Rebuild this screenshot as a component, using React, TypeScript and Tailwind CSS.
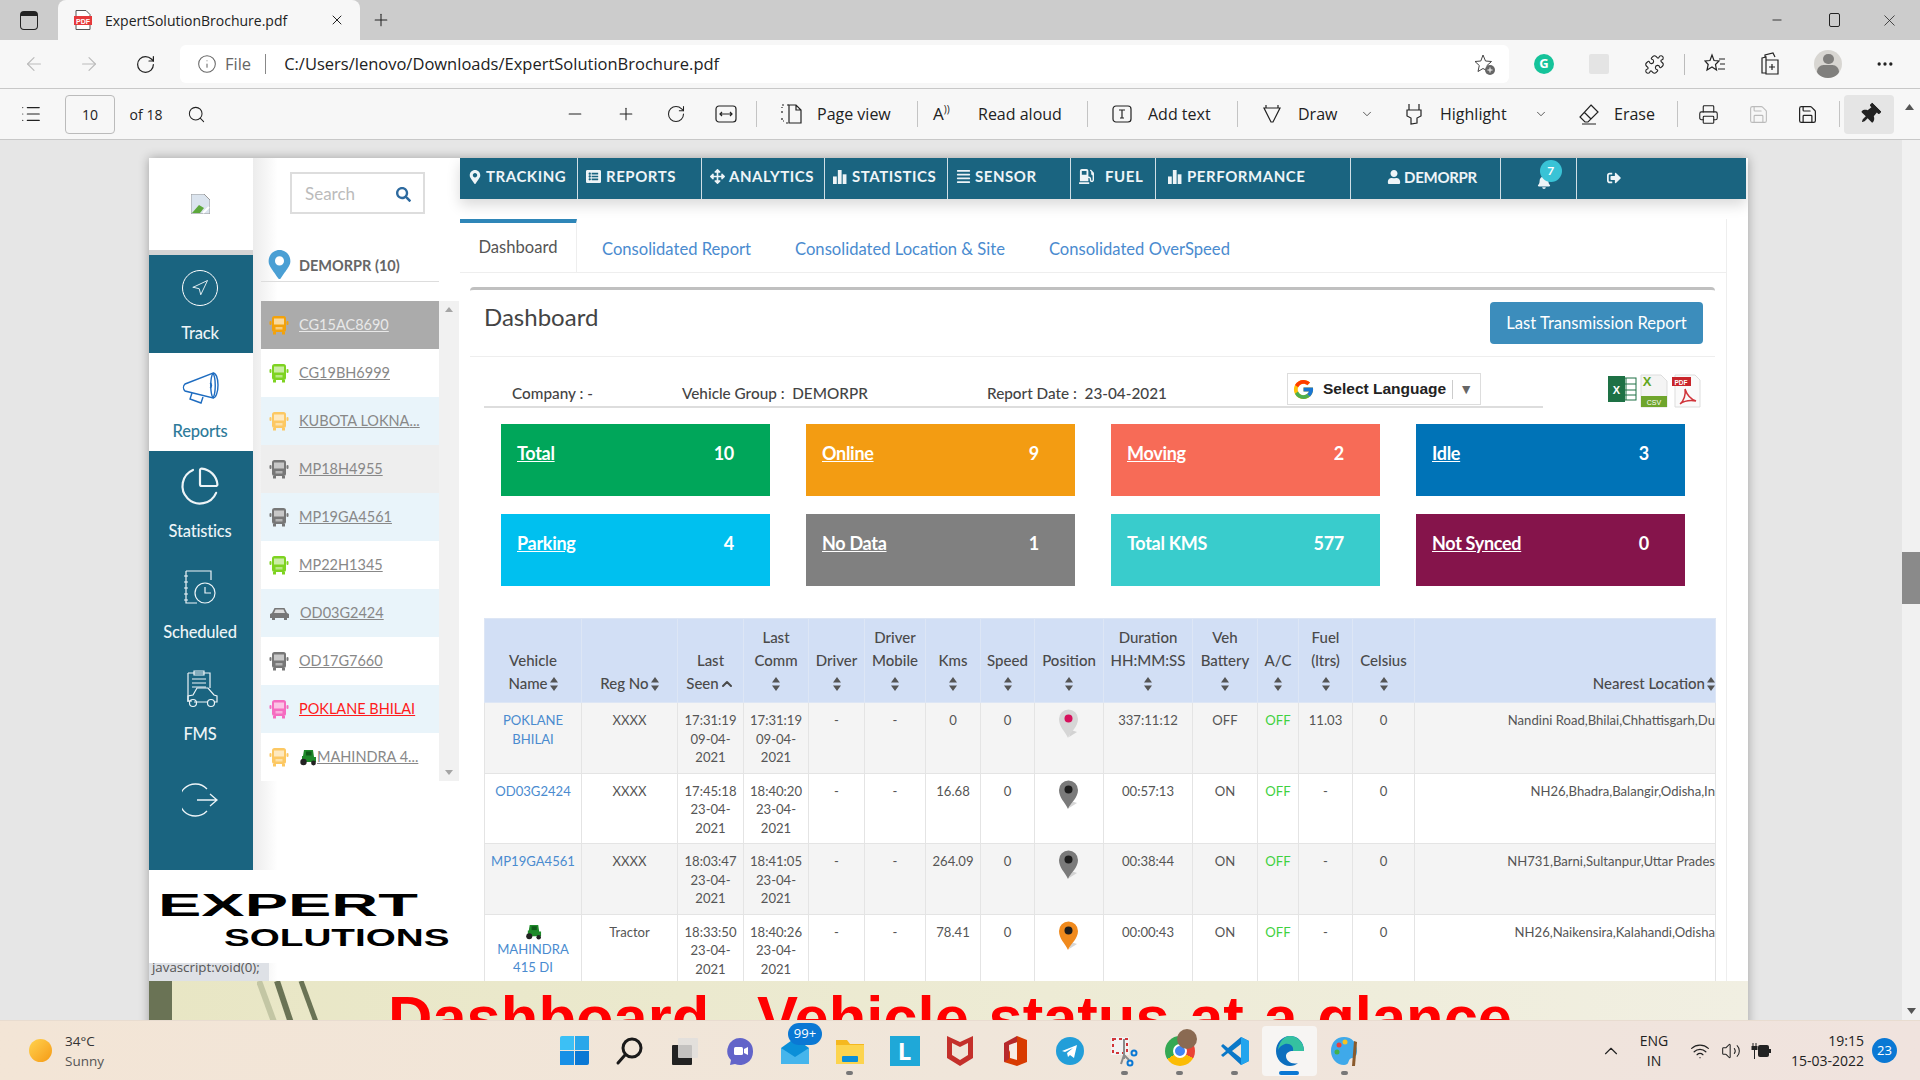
import { Fragment, type ReactNode } from "react";
import {
  ArrowLeft,
  ArrowRight,
  RotateCw,
  Info,
  Search,
  Minus,
  Plus,
  X,
  List,
  Puzzle,
  MoreHorizontal,
  ChevronDown,
  ChevronUp,
  Printer,
  Save,
  Navigation,
  PieChart,
  Wifi,
  Volume2,
} from "lucide-react";
import {
  FaMapMarkerAlt,
  FaListAlt,
  FaArrowsAlt,
  FaAlignJustify,
  FaGasPump,
  FaUser,
  FaBell,
  FaSignOutAlt,
  FaThumbtack,
  FaSearch,
} from "react-icons/fa";
import { FcGoogle } from "react-icons/fc";

const Sep = () => <div className="w-px h-[26px] bg-[#c4c4c4]" />;

const Bars = () => (
  <svg width="14" height="14" viewBox="0 0 13 13" fill="currentColor">
    <rect x="0" y="6" width="3.5" height="7" />
    <rect x="4.5" y="0" width="3.5" height="13" />
    <rect x="9" y="4" width="3.5" height="9" />
  </svg>
);

const Sort = () => (
  <svg width="8" height="14" viewBox="0 0 8 14" fill="#555" className="inline-block align-[-2px]">
    <path d="M4 0 8 5.5H0zM4 14 0 8.5h8z" />
  </svg>
);

const Bus = ({ color }: { color: string }) => (
  <svg width="20" height="20" viewBox="0 0 20 20" fill={color}>
    <rect x="3" y="1" width="14" height="16" rx="2.5" />
    <rect x="0.5" y="6" width="2" height="4" rx="1" />
    <rect x="17.5" y="6" width="2" height="4" rx="1" />
    <rect x="4" y="17" width="3" height="2.5" />
    <rect x="13" y="17" width="3" height="2.5" />
    <rect x="5" y="3.5" width="10" height="6" fill="#fff" opacity="0.6" />
    <rect x="6.5" y="12" width="7" height="2.5" fill="#fff" opacity="0.45" />
  </svg>
);

const Car = ({ color }: { color: string }) => (
  <svg width="21" height="20" viewBox="0 0 21 20" fill={color}>
    <path d="M1 15v-4l2-1 2.500-5h10l2.500 5 2 1v4h-2v2h-3v-2H6v2H3v-2z" />
    <path d="M6.500 6.500h8l1.500 3.500H5z" fill="#fff" opacity="0.75" />
  </svg>
);

const Tractor = ({ size = 18 }: { size?: number }) => (
  <svg width={size} height={size} viewBox="0 0 18 18">
    <path d="M5 2h9l1 7h2v5H3V8h1z" fill="#1f8a2a" />
    <rect x="7" y="3.500" width="5.500" height="4" fill="#0e5a18" />
    <circle cx="4.500" cy="14" r="3.200" fill="#222" />
    <circle cx="14.500" cy="15" r="2.400" fill="#222" />
  </svg>
);

const Pin = ({ color, dot }: { color: string; dot: string }) => (
  <svg width="22" height="30" viewBox="0 0 22 30" className="mx-auto">
    <path d="M11 28 19 23 13 21z" fill="#bbb" opacity="0.6" />
    <path d="M10 29C7 22 1 18 1 10a9.500 9.500 0 0 1 19 0c0 8-7 12-10 19z" fill={color} />
    <circle cx="10.500" cy="9.500" r="4" fill={dot} />
  </svg>
);

const vehicles = [
  { name: "CG15AC8690", color: "#f2a20c", text: "text-[#e8e8e8]", bg: "bg-[#ababab]" },
  { name: "CG19BH6999", color: "#7ed321", text: "text-[#888]", bg: "bg-white" },
  { name: "KUBOTA LOKNA", more: true, color: "#fcc863", text: "text-[#888]", bg: "bg-[#e9f4fa]" },
  { name: "MP18H4955", color: "#777", text: "text-[#888]", bg: "bg-[#eeeeee]" },
  { name: "MP19GA4561", color: "#777", text: "text-[#888]", bg: "bg-[#e9f4fa]" },
  { name: "MP22H1345", color: "#7ed321", text: "text-[#888]", bg: "bg-white" },
  { name: "OD03G2424", color: "#777", car: true, text: "text-[#888]", bg: "bg-[#e9f4fa]" },
  { name: "OD17G7660", color: "#777", text: "text-[#888]", bg: "bg-white" },
  { name: "POKLANE BHILAI", color: "#f56cc0", text: "text-[#ff1a1a]", bg: "bg-[#e9f4fa]" },
  { name: "MAHINDRA 4", more: true, tractor: true, color: "#fcc863", text: "text-[#888]", bg: "bg-white" },
];

const cards = [
  { label: "Total", value: "10", bg: "bg-[#00a65a]", u: true },
  { label: "Online", value: "9", bg: "bg-[#f39c12]", u: true },
  { label: "Moving", value: "2", bg: "bg-[#f76b57]", u: true },
  { label: "Idle", value: "3", bg: "bg-[#0073b7]", u: true },
  { label: "Parking", value: "4", bg: "bg-[#00c0ef]", u: true },
  { label: "No Data", value: "1", bg: "bg-[#808080]", u: true },
  { label: "Total KMS", value: "577", bg: "bg-[#39cccc]", u: false },
  { label: "Not Synced", value: "0", bg: "bg-[#85144b]", u: true },
];

const columns: { w: string; lines: string[]; sort?: "inline" | "below" | "up" }[] = [
  { w: "w-[97px]", lines: ["Vehicle", "Name"], sort: "inline" },
  { w: "w-[96px]", lines: ["Reg No"], sort: "inline" },
  { w: "w-[66px]", lines: ["Last", "Seen"], sort: "up" },
  { w: "w-[65px]", lines: ["Last", "Comm"], sort: "below" },
  { w: "w-[56px]", lines: ["Driver"], sort: "below" },
  { w: "w-[61px]", lines: ["Driver", "Mobile"], sort: "below" },
  { w: "w-[55px]", lines: ["Kms"], sort: "below" },
  { w: "w-[54px]", lines: ["Speed"], sort: "below" },
  { w: "w-[69px]", lines: ["Position"], sort: "below" },
  { w: "w-[89px]", lines: ["Duration", "HH:MM:SS"], sort: "below" },
  { w: "w-[65px]", lines: ["Veh", "Battery"], sort: "below" },
  { w: "w-[41px]", lines: ["A/C"], sort: "below" },
  { w: "w-[54px]", lines: ["Fuel", "(ltrs)"], sort: "below" },
  { w: "w-[62px]", lines: ["Celsius"], sort: "below" },
  { w: "w-[301px]", lines: ["Nearest Location"], sort: "inline" },
];

const rows = [
  { name: ["POKLANE", "BHILAI"], reg: "XXXX", seen: "17:31:19", seenD: "09-04-", comm: "17:31:19", commD: "09-04-", kms: "0", pin: ["#d6d6d6", "#d6115c"], dur: "337:11:12", bat: "OFF", fuel: "11.03", loc: "Nandini Road,Bhilai,Chhattisgarh,Du" },
  { name: ["OD03G2424"], reg: "XXXX", seen: "17:45:18", seenD: "23-04-", comm: "18:40:20", commD: "23-04-", kms: "16.68", pin: ["#7a7a7a", "#1d1d1d"], dur: "00:57:13", bat: "ON", fuel: "-", loc: "NH26,Bhadra,Balangir,Odisha,In" },
  { name: ["MP19GA4561"], reg: "XXXX", seen: "18:03:47", seenD: "23-04-", comm: "18:41:05", commD: "23-04-", kms: "264.09", pin: ["#7a7a7a", "#1d1d1d"], dur: "00:38:44", bat: "ON", fuel: "-", loc: "NH731,Barni,Sultanpur,Uttar Prades" },
  { name: ["MAHINDRA", "415 DI"], tractor: true, reg: "Tractor", seen: "18:33:50", seenD: "23-04-", comm: "18:40:26", commD: "23-04-", kms: "78.41", pin: ["#f08a1d", "#1d1d1d"], dur: "00:00:43", bat: "ON", fuel: "-", loc: "NH26,Naikensira,Kalahandi,Odisha" },
];

const navItems: { w: string; label: string; icon: ReactNode; cls?: string }[] = [
  { w: "w-[118px]", label: "TRACKING", icon: <FaMapMarkerAlt size={14} /> },
  { w: "w-[124px]", label: "REPORTS", icon: <FaListAlt size={15} />, cls: "gap-[5px]" },
  { w: "w-[123px]", label: "ANALYTICS", icon: <FaArrowsAlt size={15} /> },
  { w: "w-[123px]", label: "STATISTICS", icon: <Bars />, cls: "gap-[5px]" },
  { w: "w-[123px]", label: "SENSOR", icon: <FaAlignJustify size={15} /> },
  { w: "w-[85px]", label: "FUEL", icon: <FaGasPump size={15} />, cls: "gap-[11px]" },
  { w: "w-[195px]", label: "PERFORMANCE", icon: <Bars />, cls: "gap-[5px] pl-[12px]" },
];

const Side = ({ h, active, label, icon, cls }: { h: string; active?: boolean; label?: string; icon: ReactNode; cls?: string }) => (
  <div className={`${h} ${cls ?? ""} flex flex-col items-center pr-[2px] ${active ? "bg-white text-[#2e7b9a]" : "text-[#edf4f7]"}`}>
    {icon}
    {label && <span className="text-[16.5px] font-medium leading-5 tracking-[-0.2px]">{label}</span>}
  </div>
);

const TaskIcon = ({ children, dot, active }: { children: ReactNode; dot?: boolean; active?: boolean }) => (
  <div className={`relative w-[55px] h-[50px] flex items-center justify-center rounded ${active ? "bg-[#f7f5f3]" : ""}`}>
    {children}
    {dot && <div className="absolute bottom-[1px] left-[24px] w-[7px] h-[4px] rounded-full bg-[#777]" />}
    {active && <div className="absolute bottom-[1px] left-[17px] w-[20px] h-[4px] rounded-full bg-[#0a78d4]" />}
  </div>
);

const App = () => {
  return (
    <div className="w-[1920px] h-[1080px] overflow-hidden flex flex-col bg-[#e6e6e6] font-['Open_Sans',sans-serif] text-[#222]">
      {/* tab strip */}
      <div className="h-10 bg-[#cccccc] flex items-end shrink-0">
        <div className="w-[58px] h-10 flex items-center justify-center">
          <div className="w-[18px] h-[19px] border-[1.5px] border-[#222] rounded-[4px] border-t-[5px]" />
        </div>
        <div className="w-[302px] h-10 bg-[#f7f7f7] rounded-t-lg flex items-center pl-[16px] pr-[15px]">
          <svg width="18" height="20" viewBox="0 0 18 20">
            <path d="M2 .5h10l4 4V19.500H2z" fill="#fff" stroke="#555" />
            <rect x="0" y="6" width="18" height="9" fill="#e5393b" />
            <text x="9" y="13.500" textAnchor="middle" fontSize="7" fontWeight="700" fill="#fff" fontFamily="Liberation Sans">PDF</text>
          </svg>
          <span className="ml-[13px] text-[14px] flex-1">ExpertSolutionBrochure.pdf</span>
          <X size={16} strokeWidth={1.5} />
        </div>
        <div className="w-[42px] h-10 flex items-center justify-center">
          <Plus size={20} strokeWidth={1.25} />
        </div>
        <div className="flex-1" />
        <div className="flex h-10 items-center">
          <div className="w-[58px] flex justify-center"><Minus size={14} strokeWidth={1.5} /></div>
          <div className="w-[56px] flex justify-center">
            <div className="w-[11px] h-[14px] border border-[#222] rounded-[2px]" />
          </div>
          <div className="w-[58px] flex justify-center pr-[3px]"><X size={19} strokeWidth={1} /></div>
        </div>
      </div>

      {/* address row */}
      <div className="h-[49px] bg-[#f7f7f7] border-b border-[#c8c8c8] flex items-center shrink-0">
        <div className="w-[67px] flex justify-center text-[#bbb]"><ArrowLeft size={22} strokeWidth={1.25} /></div>
        <div className="w-[43px] flex justify-center text-[#bbb]"><ArrowRight size={22} strokeWidth={1.25} /></div>
        <div className="w-[70px] flex justify-center"><RotateCw size={21} strokeWidth={1.4} /></div>
        <div className="w-[1329px] h-[38px] bg-white rounded-md flex items-center">
          <Info size={20} strokeWidth={1.25} className="ml-[17px] text-[#666]" />
          <span className="ml-[8px] text-[16.5px] text-[#666]">File</span>
          <div className="ml-[14px] w-px h-[20px] bg-[#888]" />
          <span className="ml-[18px] text-[16.500px] flex-1">C:/Users/lenovo/Downloads/ExpertSolutionBrochure.pdf</span>
          <svg width="24" height="24" viewBox="0 0 24 24" className="mr-[13px]" fill="none" stroke="#444">
            <path d="M11 3l2.500 6 6 .5-4.500 4 1.500 6-5.500-3-5 3 1.300-6L3 9.500l5.800-.5z" />
            <circle cx="18" cy="18" r="5" fill="#666" stroke="none" />
            <path d="M18 15.500v5M15.500 18h5" stroke="#fff" />
          </svg>
        </div>
        <div className="w-[50px] flex justify-end pr-[5px]">
          <div className="w-[20px] h-[20px] rounded-full bg-[#15c39a] text-white text-[13px] font-bold flex items-center justify-center">G</div>
        </div>
        <div className="w-[55px] flex justify-end pr-[5px]">
          <div className="w-[20px] h-[20px] bg-[#e4e4e4] rounded-[2px]" />
        </div>
        <div className="w-[56px] flex justify-end pr-[5px]"><Puzzle size={21} strokeWidth={1.25} /></div>
        <div className="w-[15px] flex justify-end"><div className="w-px h-[21px] bg-[#bbb]" /></div>
        <div className="w-[41px] flex justify-end">
          <svg width="22" height="22" viewBox="0 0 22 22" fill="none" stroke="#222" strokeWidth="1.2">
            <path d="M8 2l2 5.500 5 .5-3.500 3.500 1 5.500L8 14l-5 3 1.200-5.500L1 8l5-.5zM15 6h6M16 11h5M14 16h7" />
          </svg>
        </div>
        <div className="w-[55px] flex justify-end">
          <svg width="22" height="24" viewBox="0 0 22 24" fill="none" stroke="#222" strokeWidth="1.2">
            <path d="M6 5V3l8-2 2 4M3 6l4-1v16H3zM7 8h12v14H7z" />
            <path d="M13 12v6M10 15h6" />
          </svg>
        </div>
        <div className="w-[61px] flex justify-end">
          <div className="w-[28px] h-[28px] rounded-full bg-[#d8d6d2] overflow-hidden flex flex-col items-center">
            <div className="w-[11px] h-[11px] rounded-full bg-[#807f7d] mt-[4px]" />
            <div className="w-[22px] h-[14px] rounded-full bg-[#807f7d] mt-[1px]" />
          </div>
        </div>
        <div className="w-[78px] flex justify-center pl-[8px]"><MoreHorizontal size={20} strokeWidth={2} /></div>
      </div>

      {/* pdf toolbar */}
      <div className="h-[51px] bg-[#f7f7f7] border-b border-[#c8c8c8] flex items-center shrink-0 text-[16px]">
        <div className="w-[65px] flex justify-center pr-[4px]"><List size={22} strokeWidth={1.25} /></div>
        <div className="w-[50px] h-[39px] border border-[#bbb] rounded-sm text-[14px] flex items-center justify-center">10</div>
        <div className="w-[62px] text-center text-[14px]">of 18</div>
        <div className="w-[38px] flex justify-center"><Search size={19} strokeWidth={1.3} /></div>
        <div className="w-[335px]" />
        <div className="w-[50px] flex justify-center"><Minus size={20} strokeWidth={1.25} /></div>
        <div className="w-[51px] flex justify-center"><Plus size={20} strokeWidth={1.25} /></div>
        <div className="w-[50px] flex justify-center"><RotateCw size={20} strokeWidth={1.25} /></div>
        <div className="w-[50px] flex justify-center">
          <svg width="22" height="18" viewBox="0 0 22 18" fill="none" stroke="#222" strokeWidth="1.2">
            <rect x="1" y="1" width="20" height="16" rx="3" />
            <path d="M5 9h12M7 7 5 9l2 2M15 7l2 2-2 2" />
          </svg>
        </div>
        <div className="w-[23px] pl-[5px]"><Sep /></div>
        <div className="w-[36px] flex justify-center">
          <svg width="22" height="20" viewBox="0 0 22 20" fill="none" stroke="#222" strokeWidth="1.2">
            <path d="M8 1h7l5 5v13H8zM15 1v5h5" />
            <path d="M8 1H5M3 1H1v3M1 7v4M1 14v3h2M5 19h3" strokeDasharray="2 2" />
          </svg>
        </div>
        <div className="w-[107px] pl-[7px]">Page view</div>
        <div className="w-[10px]"><Sep /></div>
        <div className="w-[51px] pl-[6px] text-[17px]">A<span className="text-[10px] align-super">))</span></div>
        <div className="w-[109px]">Read aloud</div>
        <div className="w-[13px]"><Sep /></div>
        <div className="w-[44px] flex justify-center">
          <svg width="20" height="18" viewBox="0 0 20 18" fill="none" stroke="#222" strokeWidth="1.2">
            <rect x="1" y="1" width="18" height="16" rx="3" />
            <path d="M7 5h6M10 5v8M8 13h4" />
          </svg>
        </div>
        <div className="w-[93px] pl-[4px]">Add text</div>
        <div className="w-[13px]"><Sep /></div>
        <div className="w-[44px] flex justify-center">
          <svg width="20" height="24" viewBox="0 0 20 24" fill="none" stroke="#222" strokeWidth="1.2">
            <path d="M2 6h16L11 20H9zM4 6V3M16 6V3" />
          </svg>
        </div>
        <div className="w-[60px] pl-[4px]">Draw</div>
        <div className="w-[38px] pl-[6px]"><ChevronDown size={14} strokeWidth={1.25} /></div>
        <div className="w-[44px] flex justify-center">
          <svg width="20" height="24" viewBox="0 0 20 24" fill="none" stroke="#222" strokeWidth="1.2">
            <path d="M5 2v6M15 2v6M3 8h14v6l-4 2v5l-6 1v-6l-4-2z" />
          </svg>
        </div>
        <div className="w-[89px] pl-[4px]">Highlight</div>
        <div className="w-[45px] pl-[9px]"><ChevronDown size={14} strokeWidth={1.25} /></div>
        <div className="w-[38px] flex justify-center">
          <svg width="22" height="22" viewBox="0 0 22 22" fill="none" stroke="#222" strokeWidth="1.2">
            <path d="M13 2l7 7-10 10H7l-5-5zM6 9l7 7M4 21h14" />
          </svg>
        </div>
        <div className="w-[69px] pl-[6px]">Erase</div>
        <div className="w-[15px]"><Sep /></div>
        <div className="w-[33px] flex justify-center"><Printer size={21} strokeWidth={1.25} /></div>
        <div className="w-[66px] flex justify-center text-[#bbb]"><Save size={21} strokeWidth={1.25} /></div>
        <div className="w-[32px] flex justify-center"><Save size={21} strokeWidth={1.4} /></div>
        <div className="w-[21px] pl-[16px]"><Sep /></div>
        <div className="w-[50px] h-[39px] bg-[#e5e5e5] rounded-sm flex items-center justify-center"><FaThumbtack size={21} className="rotate-45" /></div>
        <svg width="9" height="6" viewBox="0 0 9 6" fill="#555" className="ml-[11px] mb-[14px]"><path d="M4.500 0 9 6H0z" /></svg>
      </div>

      {/* viewer */}
      <div className="flex-1 min-h-0 flex overflow-hidden">
        <div className="w-[1902px] pl-[149px] pt-[18px] overflow-hidden">
          <div className="w-[1599px] shadow-[0_0_10px_rgba(0,0,0,0.3)] font-['Lato',sans-serif]">
            <div className="relative h-[823px] bg-white flex overflow-hidden">
              {/* sidebar */}
              <div className="w-[104px] h-full shrink-0 flex flex-col bg-[#1a6480]">
                <div className="h-[92px] bg-white flex items-center justify-center pr-[2px]">
                  <svg width="19" height="20" viewBox="0 0 19 20">
                    <path d="M0 0h13l6 6v14H0z" fill="#dbe4ee" stroke="#999" />
                    <path d="M1 19l7-8 5 3-4 5z" fill="#5da83c" />
                    <path d="M12 19l6-6" stroke="#fff" strokeWidth="2" />
                  </svg>
                </div>
                <div className="h-[5px] bg-[#d4d4d4]" />
                <Side
                  h="h-[98px]"
                  cls="pt-[15px]"
                  label="Track"
                  icon={
                    <div className="w-[36px] h-[36px] mb-[17px] rounded-full border-[1.5px] border-white flex items-center justify-center">
                      <Navigation size={18} strokeWidth={1.25} />
                    </div>
                  }
                />
                <Side
                  h="h-[98px]"
                  cls="pt-[18px]"
                  active
                  label="Reports"
                  icon={
                    <svg width="37" height="33" viewBox="0 0 37 33" fill="none" stroke="#1e6cc0" strokeWidth="1.4" className="mb-[17px]">
                      <path d="M3 13 31 2c3 5 3 20 0 25L3 20c-2-2-2-5 0-7z" />
                      <path d="M31 2c-3 5-3 20 0 25M31 2c3 0 5 5 5 12s-2 13-5 13" />
                      <path d="M10 22l-2 6 11 4 2-6" />
                      <path d="M28 12c2 1 2 4 0 5" />
                    </svg>
                  }
                />
                <Side h="h-[100px]" cls="pt-[14px]" label="Statistics" icon={<PieChart size={42} strokeWidth={1.25} className="mb-[14px]" />} />
                <Side
                  h="h-[100px]"
                  cls="pt-[18px]"
                  label="Scheduled"
                  icon={
                    <svg width="34" height="36" viewBox="0 0 34 36" fill="none" stroke="currentColor" strokeWidth="1.2" className="mb-[17px]">
                      <path d="M3 2h25v9M3 2v32h11" />
                      <path d="M1 7h4M1 13h4M1 19h4M1 25h4M1 31h4" />
                      <circle cx="22" cy="24" r="10" />
                      <path d="M22 18v6h6" />
                    </svg>
                  }
                />
                <Side
                  h="h-[100px]"
                  cls="pt-[18px]"
                  label="FMS"
                  icon={
                    <svg width="36" height="42" viewBox="0 0 36 42" fill="none" stroke="currentColor" strokeWidth="1.2" className="mb-[13px]">
                      <path d="M6 4h22v15M6 4v28h4M12 2h10v4H12zM10 10h14M10 14h14M10 18h14" />
                      <path d="M6 33v-6l5-1 4-7h11l6 7 3 1v6h-3M12 33h14" />
                      <circle cx="11" cy="34" r="3.500" />
                      <circle cx="29" cy="34" r="3.500" />
                    </svg>
                  }
                />
                <Side
                  h="flex-1"
                  cls="pt-[32px]"
                  icon={
                    <svg width="36" height="34" viewBox="0 0 36 34" fill="none" stroke="currentColor" strokeWidth="1.3">
                      <path d="M25 6A16 16 0 1 0 25 28" />
                      <path d="M15 17h20M28 11l7 6-7 6" />
                    </svg>
                  }
                />
              </div>

              {/* vehicle list */}
              <div className="w-[207px] h-full shrink-0 bg-gradient-to-r from-[#ececec] via-white via-[12%] to-white">
                <div className="ml-[37px] mt-[14px] w-[135px] h-[42px] border-2 border-[#ddd] flex items-center pl-[13px] pr-[12px] pt-[2px] justify-between">
                  <span className="text-[17px] text-[#bbb]">Search</span>
                  <FaSearch size={15} className="text-[#2d6a9f]" />
                </div>
                <div className="ml-[8px] w-[178px] h-[68px] border-b border-[#ddd] flex items-end pb-[2px] gap-[5px] pl-[4px]">
                  <FaMapMarkerAlt size={29} className="text-[#4a9fd4]" />
                  <span className="text-[14.5px] font-bold text-[#666] mb-[2px]">DEMORPR (10)</span>
                </div>
                <div className="ml-[8px] mt-[19px] flex">
                  <div className="w-[178px]">
                    {vehicles.map((v) => (
                      <div key={v.name} className={`h-[48px] flex items-center pl-[8px] ${v.bg}`}>
                        {v.car ? <Car color={v.color} /> : <Bus color={v.color} />}
                        <span className={`ml-[10px] text-[14.5px] whitespace-nowrap ${v.text}`}>
                          <span className="underline flex items-center">
                            {v.tractor && <Tractor />}
                            {v.name}
                            {v.more && <span className="no-underline">...</span>}
                          </span>
                        </span>
                      </div>
                    ))}
                  </div>
                  <div className="w-[20px] bg-[#f1f1f1] flex flex-col items-center justify-between py-[6px] text-[#a5a5a5]">
                    <svg width="8" height="5" viewBox="0 0 8 5" fill="currentColor"><path d="M4 0l4 5H0z" /></svg>
                    <svg width="8" height="5" viewBox="0 0 8 5" fill="currentColor"><path d="M4 5 8 0H0z" /></svg>
                  </div>
                </div>
              </div>

              {/* main */}
              <div className="w-[1286px] shrink-0 h-full">
                <div className="h-[41px] bg-[#1a6480] text-[#eef4f7] flex text-[15px] font-bold tracking-[0.55px] shadow-[0_6px_14px_rgba(0,0,0,0.15)]">
                  {navItems.map((n) => (
                    <div key={n.label} className={`${n.w} ${n.cls ?? "gap-[4px]"} border-r border-[#cfdfe6] flex items-center pl-[8px] pb-[4px]`}>
                      {n.icon}
                      <span>{n.label}</span>
                    </div>
                  ))}
                  <div className="w-[150px] border-r border-[#cfdfe6] flex items-center justify-center gap-[3px] tracking-[-0.3px] pb-[3px] pl-[13px]">
                    <FaUser size={14} />
                    <span>DEMORPR</span>
                  </div>
                  <div className="relative w-[76px] border-r border-[#cfdfe6] flex items-center pl-[36px]">
                    <FaBell size={14} className="mt-[6px]" />
                    <div className="absolute left-[39px] top-[2px] w-[22px] h-[22px] rounded-full bg-[#39c3d6] text-white text-[12px] flex items-center justify-center">7</div>
                  </div>
                  <div className="flex-1 flex items-center pl-[30px] pb-[2px]"><FaSignOutAlt size={14} /></div>
                </div>

                <div className="w-[1267px] mt-[20px] border-r border-[#eee]">
                  <div className="h-[54px] border-b border-[#eee] flex items-center text-[16.6px] pt-[8px]">
                    <div className="w-[117px] h-[54px] mt-[-8px] border-t-4 border-[#2e86b8] border-r border-r-[#eee] flex items-center justify-center text-[#555] pb-[1px]">Dashboard</div>
                    <span className="ml-[25px] text-[#4a8bcf]">Consolidated Report</span>
                    <span className="ml-[44px] text-[#4a8bcf]">Consolidated Location &amp; Site</span>
                    <span className="ml-[44px] text-[#4a8bcf]">Consolidated OverSpeed</span>
                  </div>

                  <div className="ml-[10px] w-[1245px] mt-[14px] border-t-[3px] border-[#c0c0c0] rounded-t">
                    <div className="h-[67px] border-b border-[#eee] flex items-start justify-between pl-[14px] pr-[12px]">
                      <span className="text-[24px] text-[#444] mt-[9px]">Dashboard</span>
                      <div className="w-[213px] h-[42px] mt-[12px] bg-[#3c8dbc] rounded-[4px] text-white text-[16.6px] flex items-center justify-center">Last Transmission Report</div>
                    </div>
                    <div className="pl-[14px]">
                      <div className="flex mt-[16px] h-[35px]">
                        <div className="w-[1059px] border-b-2 border-[#ddd] flex items-start text-[15.3px] font-medium text-[#444]">
                          <span className="w-[198px] pl-[28px] mt-[9px]">Company : -</span>
                          <span className="w-[305px] mt-[9px] whitespace-pre">Vehicle Group :  DEMORPR</span>
                          <span className="w-[300px] mt-[9px] whitespace-pre">Report Date :  23-04-2021</span>
                          <div className="w-[194px] h-[32px] border border-[#ddd] bg-white flex items-center pl-[4px] font-['Liberation_Sans',sans-serif] text-[15.5px] font-bold text-[#222]">
                            <FcGoogle size={23} />
                            <span className="ml-[8px]">Select Language</span>
                            <div className="ml-[6px] w-px h-[19px] bg-[#ccc]" />
                            <span className="ml-[6px] text-[#666] text-[14px]">▼</span>
                          </div>
                        </div>
                        <div className="ml-[64px] flex items-start gap-[3px] mt-[1px]">
                          <svg width="30" height="30" viewBox="0 0 30 30">
                            <rect x="10" y="4" width="19" height="22" fill="#fff" stroke="#1e7145" />
                            <path d="M10 10h19M10 16h19M10 21h19M19 4v22" stroke="#1e7145" />
                            <rect x="1" y="2" width="17" height="26" fill="#1e7145" />
                            <text x="9.500" y="20" textAnchor="middle" fontSize="11" fontWeight="700" fill="#fff" fontFamily="Liberation Sans">X</text>
                          </svg>
                          <svg width="28" height="34" viewBox="0 0 28 34">
                            <path d="M1 1h20l6 6v26H1z" fill="#f4f4f4" stroke="#ddd" />
                            <text x="7" y="12" textAnchor="middle" fontSize="13" fontWeight="700" fill="#63a61e" fontFamily="Liberation Sans">X</text>
                            <rect x="1" y="22" width="26" height="11" fill="#6fa52c" />
                            <text x="14" y="31" textAnchor="middle" fontSize="7" fill="#fff" fontFamily="Liberation Sans">CSV</text>
                          </svg>
                          <svg width="30" height="34" viewBox="0 0 30 34">
                            <path d="M4 1h20l5 5v27H4z" fill="#fafafa" stroke="#ddd" />
                            <rect x="1" y="3" width="19" height="9" fill="#c9252b" />
                            <text x="10" y="10.500" textAnchor="middle" fontSize="6.500" fontWeight="700" fill="#fff" fontFamily="Liberation Sans">PDF</text>
                            <path d="M9 30c4-3 6-10 5-15 2 6 5 10 11 12-6-1-12 0-16 3z" fill="none" stroke="#d0343a" strokeWidth="1.500" />
                          </svg>
                        </div>
                      </div>

                      <div className="ml-[17px] mt-[16px] w-[1184px] grid grid-cols-4 gap-x-[36px] gap-y-[18px]">
                        {cards.map((c) => (
                          <div key={c.label} className={`${c.bg} h-[72px] flex items-center justify-between pl-[16px] pr-[36px] pb-[14px] text-white text-[18px] font-bold tracking-[-0.3px]`}>
                            <span className={c.u ? "underline" : ""}>{c.label}</span>
                            <span>{c.value}</span>
                          </div>
                        ))}
                      </div>

                      <table className="mt-[32px] table-fixed border-collapse w-[1231px] text-[13.1px] text-[#555]">
                        <colgroup>
                          {columns.map((c) => (
                            <col key={c.lines.join()} className={c.w} />
                          ))}
                        </colgroup>
                        <thead>
                          <tr className="h-[84px] bg-[#d2dff5]">
                            {columns.map((c, i) => (
                              <th key={c.lines.join()} className={`border border-[#dde6f5] align-bottom px-0 pb-[7px] text-[15px] leading-[23px] font-medium text-[#4a4a4a] ${i === 14 ? "text-right whitespace-nowrap overflow-hidden" : "text-center"}`}>
                                {c.lines.map((l, idx) => (
                                  <Fragment key={l}>
                                    {l}
                                    {idx === c.lines.length - 1 && c.sort === "inline" && <span className="ml-[2px]"><Sort /></span>}
                                    {idx === c.lines.length - 1 && c.sort === "up" && <ChevronUp size={16} strokeWidth={3} className="inline-block align-[-3px]" />}
                                    {idx < c.lines.length - 1 && <br />}
                                  </Fragment>
                                ))}
                                {c.sort === "below" && (
                                  <>
                                    <br />
                                    <Sort />
                                  </>
                                )}
                              </th>
                            ))}
                          </tr>
                        </thead>
                        <tbody>
                          {rows.map((r, i) => (
                            <tr key={r.dur} className={`h-[70.5px] leading-[18.7px] text-center ${i % 2 === 0 ? "bg-[#f4f4f4]" : "bg-white"}`}>
                              <td className="border border-[#e4e4e4] align-top pt-[8px] text-[#4a8bcf]">
                                {r.tractor && <div className="flex justify-center"><Tractor size={17} /></div>}
                                {r.name.map((n) => <div key={n}>{n}</div>)}
                              </td>
                              <td className="border border-[#e4e4e4] align-top pt-[8px]">{r.reg}</td>
                              <td className="border border-[#e4e4e4] align-top pt-[8px]">{r.seen}<br />{r.seenD}<br />2021</td>
                              <td className="border border-[#e4e4e4] align-top pt-[8px]">{r.comm}<br />{r.commD}<br />2021</td>
                              <td className="border border-[#e4e4e4] align-top pt-[8px]">-</td>
                              <td className="border border-[#e4e4e4] align-top pt-[8px]">-</td>
                              <td className="border border-[#e4e4e4] align-top pt-[8px]">{r.kms}</td>
                              <td className="border border-[#e4e4e4] align-top pt-[8px]">0</td>
                              <td className="border border-[#e4e4e4] align-top pt-[6px]"><Pin color={r.pin[0]} dot={r.pin[1]} /></td>
                              <td className="border border-[#e4e4e4] align-top pt-[8px]">{r.dur}</td>
                              <td className="border border-[#e4e4e4] align-top pt-[8px]">{r.bat}</td>
                              <td className="border border-[#e4e4e4] align-top pt-[8px] text-[#3fd13f]">OFF</td>
                              <td className="border border-[#e4e4e4] align-top pt-[8px]">{r.fuel}</td>
                              <td className="border border-[#e4e4e4] align-top pt-[8px]">0</td>
                              <td className="border border-[#e4e4e4] align-top pt-[8px] text-right whitespace-nowrap overflow-hidden">{r.loc}</td>
                            </tr>
                          ))}
                        </tbody>
                      </table>
                    </div>
                  </div>
                </div>
              </div>

              {/* logo image sits over the lower left of the page */}
              <div className="absolute left-0 top-[712px] w-[335px] h-[93px] bg-white overflow-hidden text-black font-['Liberation_Sans',sans-serif] font-bold">
                <div className="ml-[9px] mt-[19px] text-[32px] leading-[32px] origin-left scale-x-[2.03]">EXPERT</div>
                <div className="ml-[75px] mt-[5px] text-[24px] leading-[24px] origin-left scale-x-[1.61]">SOLUTIONS</div>
              </div>
              <div className="absolute left-0 top-[805px] w-[120px] h-[18px] overflow-hidden bg-[#dee1e6] text-[#555] text-[13.3px] leading-[8px] pl-[3px] font-['Open_Sans',sans-serif]">javascript:void(0);</div>
            </div>

            {/* next block of the brochure page */}
            <div className="h-[60px] flex bg-gradient-to-r from-[#e8e6c4] to-[#f1efe2] overflow-hidden">
              <div className="w-[23px] bg-[#6a7355]" />
              <svg width="70" height="60" viewBox="0 0 70 60" className="ml-[85px]" fill="none">
                <path d="M2 0l22 60" stroke="#c3c6a4" strokeWidth="6" />
                <path d="M20 0l20 60" stroke="#6a7355" strokeWidth="6" />
                <path d="M44 0l22 60" stroke="#6a7355" strokeWidth="5" />
              </svg>
              <div className="ml-[61px] mt-[6px] text-[#ff0000] text-[61.5px] leading-none font-bold font-['Liberation_Sans',sans-serif] whitespace-nowrap [word-spacing:2.5px]">
                Dashboard <span className="inline-block mx-[-6px] align-[-14px]">-</span> Vehicle status at a glance
              </div>
            </div>
          </div>
        </div>
        <div className="w-[18px] bg-[#f1f1f1] flex flex-col items-center py-[6px] text-[#555]">
          <div className="w-[18px] h-[52px] bg-[#8a8a8a] mt-[406px]" />
          <div className="flex-1" />
          <svg width="9" height="6" viewBox="0 0 9 6" fill="currentColor"><path d="M4.500 6 9 0H0z" /></svg>
        </div>
      </div>

      {/* taskbar */}
      <div className="h-[60px] shrink-0 flex items-center bg-gradient-to-r from-[#f3e5d6] via-[#f0e6da] to-[#f0e3de] border-t border-[#e8dcd0] font-['Open_Sans',sans-serif]">
        <div className="w-[547px] flex items-center pl-[29px]">
          <div className="w-[23px] h-[23px] rounded-full bg-gradient-to-br from-[#ffd34d] to-[#f59a0c]" />
          <div className="ml-[13px] text-[13.5px] leading-[20px] text-[#333]">
            <div>34°C</div>
            <div className="text-[#555]">Sunny</div>
          </div>
        </div>
        <TaskIcon>
          <div className="grid grid-cols-2 gap-[1px] w-[29px] h-[29px]">
            <div className="bg-[#3cc0f5] rounded-tl-[2px]" />
            <div className="bg-[#2aa7ea]" />
            <div className="bg-[#1890e6]" />
            <div className="bg-[#0a78d4] rounded-br-[2px]" />
          </div>
        </TaskIcon>
        <TaskIcon>
          <svg width="30" height="30" viewBox="0 0 30 30" fill="none" stroke="#1a1a1a" strokeWidth="3">
            <circle cx="17" cy="12" r="9" />
            <path d="M10 19 3 27" strokeLinecap="round" />
          </svg>
        </TaskIcon>
        <TaskIcon>
          <svg width="30" height="30" viewBox="0 0 30 30">
            <rect x="2" y="9" width="20" height="20" rx="1" fill="#222" />
            <rect x="8" y="2" width="20" height="20" rx="1" fill="#e0dedc" opacity="0.85" />
          </svg>
        </TaskIcon>
        <TaskIcon>
          <svg width="30" height="30" viewBox="0 0 30 30">
            <path d="M15 2a13 13 0 0 1 13 13v1a13 13 0 0 1-18 12l-5 1 1-5A13 13 0 0 1 15 2z" fill="#6264c9" />
            <rect x="9" y="11" width="9" height="8" rx="1.500" fill="#fff" />
            <path d="M19 13l4-2v8l-4-2z" fill="#fff" />
          </svg>
        </TaskIcon>
        <TaskIcon>
          <svg width="32" height="30" viewBox="0 0 32 30">
            <path d="M2 12 16 2l14 10v16H2z" fill="#0a8fd8" />
            <path d="M2 12l14 9 14-9v16H2z" fill="#45b5ec" />
          </svg>
          <div className="absolute left-[21px] top-[-3px] w-[34px] h-[22px] rounded-full bg-[#0a78d4] text-white text-[13px] flex items-center justify-center">99+</div>
        </TaskIcon>
        <TaskIcon dot>
          <svg width="32" height="30" viewBox="0 0 32 30">
            <path d="M2 4h11l3 4h14v20H2z" fill="#f5b81f" />
            <path d="M2 9h28v19H2z" fill="#fcd44f" />
            <rect x="8" y="20" width="16" height="6" rx="1" fill="#0a8fd8" />
          </svg>
        </TaskIcon>
        <TaskIcon>
          <div className="w-[30px] h-[30px] bg-[#1fa8d8] text-white text-[24px] font-bold flex items-center justify-center">L</div>
        </TaskIcon>
        <TaskIcon>
          <svg width="28" height="32" viewBox="0 0 28 32" fill="#c4302b">
            <path d="M1 1l13 6 13-6v22l-13 8-13-8zM6 8v12l8 5 8-5V8l-8 4z" fillRule="evenodd" />
          </svg>
        </TaskIcon>
        <TaskIcon>
          <svg width="26" height="32" viewBox="0 0 26 32">
            <path d="M15 1l10 4v22l-10 4-13-4z" fill="#d83b01" />
            <path d="M15 7 8 9v14l7 2z" fill="#f6ece6" />
            <path d="M2 27V8l13-7v6L7 10v14z" fill="#b7292c" />
          </svg>
        </TaskIcon>
        <TaskIcon>
          <svg width="28" height="28" viewBox="0 0 28 28">
            <circle cx="14" cy="14" r="14" fill="#229ed9" />
            <path d="M6 14l15-6-3 13-4-3-2 2-1-4 6-5-8 4z" fill="#fff" />
          </svg>
        </TaskIcon>
        <TaskIcon dot>
          <svg width="32" height="32" viewBox="0 0 32 32" fill="none">
            <rect x="2" y="2" width="18" height="18" fill="#f2f2f2" />
            <rect x="4" y="4" width="14" height="14" stroke="#d13438" strokeWidth="2" strokeDasharray="3 3" />
            <path d="M15 4v20M15 20l-3 9M15 20l5 5" stroke="#8a8a8a" strokeWidth="2" />
            <circle cx="25" cy="18" r="2.500" stroke="#0a78d4" strokeWidth="2" />
            <circle cx="21" cy="28" r="2.500" stroke="#0a78d4" strokeWidth="2" />
          </svg>
        </TaskIcon>
        <TaskIcon dot>
          <div className="relative w-[30px] h-[30px] rounded-full bg-[conic-gradient(#ea4335_0_33%,#fbbc05_33%_66%,#34a853_66%_100%)] flex items-center justify-center">
            <div className="w-[14px] h-[14px] rounded-full bg-[#4285f4] border-2 border-white" />
            <div className="absolute left-[12px] top-[-7px] w-[20px] h-[20px] rounded-full bg-[#8a6a52]" />
          </div>
        </TaskIcon>
        <TaskIcon dot>
          <svg width="30" height="30" viewBox="0 0 30 30">
            <path d="M21 1l8 4v20l-8 4L8 17l-5 4-2-2 5-4-5-5 2-2 5 4z" fill="#0a78c8" />
            <path d="M21 8v14l-9-7z" fill="#f0e6da" />
            <path d="M21 1l8 4v20l-8 4z" fill="#22a5ee" />
          </svg>
        </TaskIcon>
        <TaskIcon active>
          <svg width="30" height="32" viewBox="0 0 30 32">
            <path d="M15 1C7 1 1 8 1 16s6 15 14 15c3 0 6-1 8-3-6 2-12-2-12-7 0-3 3-5 7-5h11C29 7 23 1 15 1z" fill="#0c6fbe" />
            <path d="M15 1c7 0 14 6 14 15H18c1-5-3-8-8-7-3 1-6 3-7 6C4 7 9 1 15 1z" fill="#35c1a0" />
          </svg>
        </TaskIcon>
        <TaskIcon dot>
          <svg width="30" height="32" viewBox="0 0 30 32">
            <path d="M14 2C6 2 1 8 1 16s6 14 13 14c5 0 4-4 6-6 3-2 7-1 7-8C27 8 22 2 14 2z" fill="#3fa9ea" />
            <circle cx="9" cy="10" r="2.500" fill="#e84040" />
            <circle cx="15" cy="7" r="2.500" fill="#f6c124" />
            <circle cx="7" cy="17" r="2.500" fill="#42b04a" />
            <path d="M24 6l3 1-2 24h-3z" fill="#8a5a2c" />
          </svg>
        </TaskIcon>
        <div className="flex-1 flex items-center text-[#222]">
          <div className="w-[250px] flex justify-end"><ChevronUp size={22} strokeWidth={1.25} /></div>
          <div className="w-[64px] text-center text-[14px] leading-[20px]">ENG<br />IN</div>
          <div className="w-[24px] ml-[2px] flex justify-center"><Wifi size={20} strokeWidth={1.5} /></div>
          <div className="w-[31px] ml-[3px] flex justify-center"><Volume2 size={20} strokeWidth={1.25} /></div>
          <div className="w-[28px] ml-[1px] flex justify-center">
            <svg width="20" height="16" viewBox="0 0 20 16" fill="#222">
              <path d="M2 0v3M5 0v3" stroke="#222" />
              <rect x="0.500" y="3" width="6" height="4" />
              <path d="M3.500 7v9" stroke="#222" />
              <rect x="7" y="2" width="11" height="12" rx="2" />
              <rect x="18" y="6" width="2" height="4" />
            </svg>
          </div>
          <div className="w-[91px] text-right text-[14px] leading-[20px] ml-[-2px]">19:15<br />15-03-2022</div>
          <div className="ml-[8px] w-[25px] h-[25px] rounded-full bg-[#0a78d4] text-white text-[13px] flex items-center justify-center">23</div>
        </div>
      </div>
    </div>
  );
};

export default App;
